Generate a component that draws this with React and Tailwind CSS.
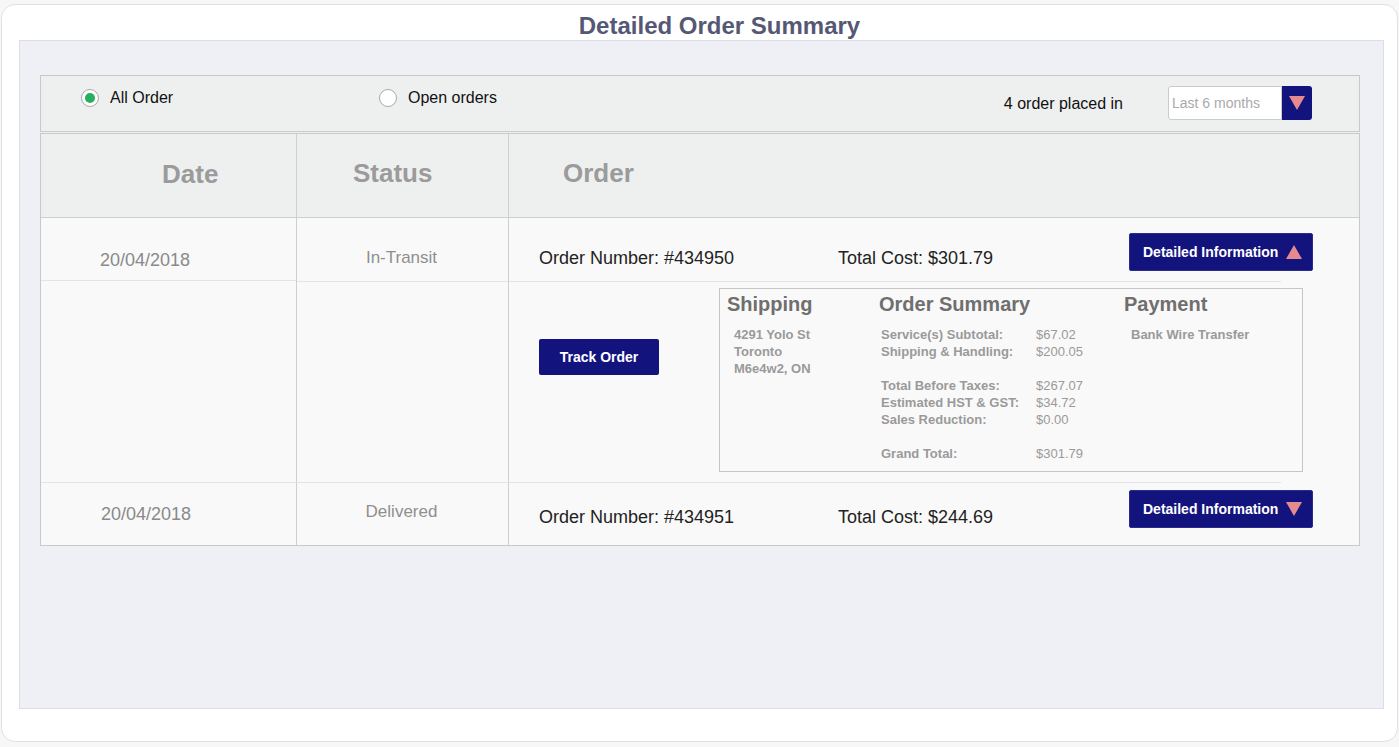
import React from "react";

const navy = "bg-[#13137e]";

const Triangle = ({ up }) => (
  <svg width="16" height="14" viewBox="0 0 16 14">
    {up ? <polygon points="8,0 16,14 0,14" fill="#e58a8e" /> : <polygon points="0,0 16,0 8,14" fill="#e58a8e" />}
  </svg>
);

const Radio = ({ checked, label, className }) => (
  <div className={`flex items-center ${className}`}>
    <span className="w-[18px] h-[18px] rounded-full border border-[#a9a9a9] bg-white flex items-center justify-center">
      {checked && <span className="w-[10px] h-[10px] rounded-full bg-[#27ae5f]" />}
    </span>
    <span className="ml-[11px] text-[16px] leading-[18px] text-[#111]">{label}</span>
  </div>
);

const DetailButton = ({ up, className }) => (
  <button className={`${navy} w-[184px] h-[38px] rounded-[2px] border border-[#2a2a8f] flex items-center pl-[13px] pr-[10px] text-white text-[14px] font-bold ${className}`}>
    <span>Detailed Information</span>
    <span className="ml-auto">
      <Triangle up={up} />
    </span>
  </button>
);

const summaryRows = [
  ["Service(s) Subtotal:", "$67.02"],
  ["Shipping & Handling:", "$200.05"],
  null,
  ["Total Before Taxes:", "$267.07"],
  ["Estimated HST & GST:", "$34.72"],
  ["Sales Reduction:", "$0.00"],
  null,
  ["Grand Total:", "$301.79"],
];

const DetailBox = () => (
  <div className="ml-[60px] mt-[6px] w-[584px] h-[184px] border border-[#c6c6c6] bg-[#f9f9f9] flex pt-[3px]">
    <div className="w-[159px] pl-[7px]">
      <div className="text-[20px] leading-[24px] font-bold text-[#6f6f6f]">Shipping</div>
      <div className="mt-[10px] pl-[7px] text-[13px] leading-[17px] font-bold text-[#9a9a9a]">
        <div>4291 Yolo St</div>
        <div>Toronto</div>
        <div>M6e4w2, ON</div>
      </div>
    </div>
    <div className="w-[245px]">
      <div className="text-[20px] leading-[24px] font-bold text-[#6f6f6f]">Order Summary</div>
      <div className="mt-[10px] pl-[2px] text-[13px] leading-[17px] text-[#9a9a9a]">
        {summaryRows.map((r, i) =>
          r ? (
            <div key={i} className="flex">
              <span className="w-[155px] font-bold">{r[0]}</span>
              <span>{r[1]}</span>
            </div>
          ) : (
            <div key={i} className="h-[17px]" />
          )
        )}
      </div>
    </div>
    <div className="flex-1">
      <div className="text-[20px] leading-[24px] font-bold text-[#6f6f6f]">Payment</div>
      <div className="mt-[10px] pl-[7px] text-[13px] leading-[17px] font-bold text-[#9a9a9a]">Bank Wire Transfer</div>
    </div>
  </div>
);

const OrderLine = ({ number, cost, up, textTop, btnTop }) => (
  <div className="flex items-start pl-[30px]">
    <span className="w-[299px] shrink-0 text-[18px] leading-[20px] text-[#222]" style={{ marginTop: textTop }}>
      Order Number: {number}
    </span>
    <span className="w-[291px] shrink-0 text-[18px] leading-[20px] text-[#222]" style={{ marginTop: textTop }}>
      Total Cost: {cost}
    </span>
    <div className="shrink-0" style={{ marginTop: btnTop }}>
      <DetailButton up={up} />
    </div>
  </div>
);

export default function App() {
  return (
    <div className="min-h-screen bg-[#f7f7f7] pt-[4px] pl-[1px] font-['Liberation_Sans',Arial,sans-serif]">
      <div className="w-[1397px] h-[738px] bg-white border border-[#e9dede] rounded-[14px]">
        <h1 className="h-[35px] pt-[7px] pl-[40px] text-center text-[24px] leading-[28px] font-bold text-[#555874]">
          Detailed Order Summary
        </h1>

        <div className="ml-[17px] w-[1365px] h-[669px] bg-[#eff0f5] border border-[#dcdde8] pt-[34px] pl-[20px]">
          {/* Filter bar */}
          <div className="w-[1320px] h-[57px] border border-[#c9c9c9] bg-[#eeefef] flex items-start pl-[40px] pr-[47px]">
            <Radio checked label="All Order" className="w-[298px] mt-[13px]" />
            <Radio label="Open orders" className="mt-[13px]" />
            <div className="ml-auto flex items-start mt-[10px]">
              <span className="mt-[9px] text-[16px] leading-[18px] text-[#111]">4 order placed in</span>
              <div className="ml-[45px] flex">
                <div className="w-[114px] h-[34px] bg-white border border-[#cbcbcb] rounded-l-[3px] flex items-center pl-[3px] text-[14px] text-[#aaa]">
                  Last 6 months
                </div>
                <div className={`${navy} w-[30px] h-[34px] rounded-r-[3px] flex items-center justify-center`}>
                  <Triangle />
                </div>
              </div>
            </div>
          </div>

          {/* Table */}
          <div className="mt-[1px] w-[1320px] border border-[#c9c9c9] bg-[#f9f9f9]">
            {/* Header */}
            <div className="flex h-[84px] bg-[#eeefef] border-b border-[#cfcfcf] text-[26px] font-bold text-[#9b9b9b]">
              <div className="w-[256px] border-r border-[#cfcfcf] flex items-center pl-[121px] pb-[3px]">Date</div>
              <div className="w-[212px] border-r border-[#cfcfcf] flex items-center pl-[56px] pb-[4px]">Status</div>
              <div className="flex-1 flex items-center pl-[54px] pb-[4px]">Order</div>
            </div>

            {/* Row 1 */}
            <div className="flex h-[264px]">
              <div className="w-[256px] border-r border-[#cfcfcf]">
                <div className="h-[63px] border-b border-[#e3e3e3] pt-[32px] pl-[59px] text-[18px] leading-[20px] text-[#8a8a8a]">
                  20/04/2018
                </div>
              </div>
              <div className="w-[212px] border-r border-[#cfcfcf]">
                <div className="h-[64px] border-b border-[#e3e3e3] pt-[30px] pr-[2px] text-center text-[17px] leading-[20px] text-[#8f8f8f]">
                  In-Transit
                </div>
              </div>
              <div className="flex-1">
                <div className="h-[63px]">
                  <OrderLine number="#434950" cost="$301.79" up textTop={30} btnTop={15} />
                </div>
                <div className="w-[772px] border-b border-[#e3e3e3]" />
                <div className="flex items-start pl-[30px]">
                  <button className={`${navy} mt-[57px] w-[120px] h-[36px] rounded-[2px] text-white text-[14px] font-bold`}>
                    Track Order
                  </button>
                  <DetailBox />
                </div>
              </div>
            </div>

            {/* Row 2 */}
            <div className="flex h-[63px]">
              <div className="w-[256px] border-r border-t border-[#e3e3e3] border-r-[#cfcfcf] pt-[21px] pl-[60px] text-[18px] leading-[20px] text-[#8a8a8a]">
                20/04/2018
              </div>
              <div className="w-[212px] border-r border-t border-[#e3e3e3] border-r-[#cfcfcf] pt-[19px] pr-[2px] text-center text-[17px] leading-[20px] text-[#8f8f8f]">
                Delivered
              </div>
              <div className="flex-1">
                <div className="w-[772px] border-t border-[#e3e3e3]" />
                <OrderLine number="#434951" cost="$244.69" textTop={24} btnTop={7} />
              </div>
            </div>
          </div>
        </div>
      </div>
    </div>
  );
}
